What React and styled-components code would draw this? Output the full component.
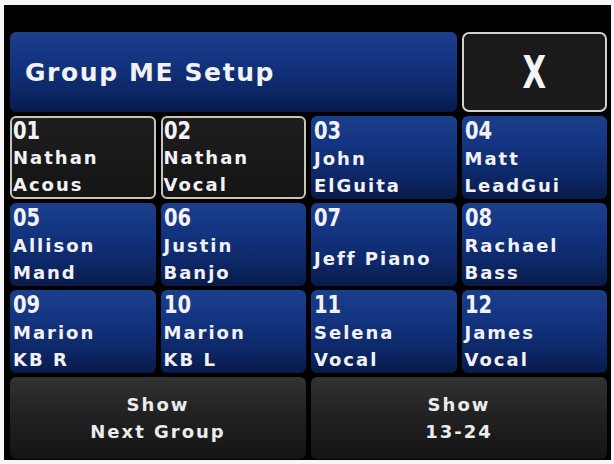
import styled, { createGlobalStyle } from "styled-components";

const GlobalStyle = createGlobalStyle`
    html, body {
        margin: 0;
        padding: 0;
        background: #f6f6f6;
    }
    body {
        font-family: "DejaVu Sans", "Verdana", sans-serif;
    }
`

const Screen = styled.div`
    margin: 5px 0 0 4px;
    width: 607px;
    height: 455px;
    box-sizing: border-box;
    background-color: #000;
    padding: 27px 4px 0 6px;
`

const Board = styled.div`
    display: grid;
    grid-template-columns: repeat(4, 1fr);
    grid-template-rows: 80px 83px 83px 83px 82px;
    column-gap: 5px;
    row-gap: 4px;
`

const blueFace = `
    background: linear-gradient(180deg, #1b3f8c 0%, #133480 35%, #0d2868 72%, #081a4a 100%);
`

const TitleBar = styled.div`
    grid-column: span 3;
    ${blueFace}
    border-radius: 6px;
    display: flex;
    align-items: center;
    padding-left: 15px;
    color: #f2f2f6;
    font-size: 25px;
    font-weight: bold;
    letter-spacing: 1.6px;
`

const CloseButton = styled.div`
    box-sizing: border-box;
    background: #1a1a1a;
    border: 2px solid #d4d0ca;
    border-radius: 7px;
    display: flex;
    align-items: center;
    justify-content: center;
    color: #f4f4f4;
`

const CloseMark = styled.span`
    display: inline-block;
    font-size: 45px;
    font-weight: bold;
    transform: scaleX(0.68);
    line-height: 1;
`

const Channel = styled.div`
    box-sizing: border-box;
    border-radius: 6px;
    display: flex;
    flex-direction: column;
    padding: 0 3px;
    color: #f2f2f6;
    ${(p) => p.selected ? `
        background: linear-gradient(180deg, #1e1e1e 0%, #141414 100%);
        border: 2px solid #cbc4b6;
        padding: 0 1px;
    ` : blueFace}
`

const Number = styled.div`
    height: 26px;
    margin-top: ${(p) => p.selected ? 0 : 2}px;
    font-size: 25px;
    line-height: 26px;
    font-weight: bold;
    transform: scaleX(0.78);
    transform-origin: left center;
    white-space: nowrap;
`

const Names = styled.div`
    flex: 1;
    display: flex;
    flex-direction: column;
    justify-content: center;
`

const Line = styled.div`
    font-size: 18px;
    line-height: 27px;
    font-weight: bold;
    letter-spacing: 2px;
    white-space: nowrap;
`

const PageButton = styled.div`
    grid-column: span 2;
    border-radius: 6px;
    background: linear-gradient(180deg, #323232 0%, #222 45%, #141414 100%);
    display: flex;
    flex-direction: column;
    align-items: center;
    justify-content: center;
    color: #ececec;
`

const channels = [
    { id: "01", lines: ["Nathan", "Acous"], selected: true },
    { id: "02", lines: ["Nathan", "Vocal"], selected: true },
    { id: "03", lines: ["John", "ElGuita"] },
    { id: "04", lines: ["Matt", "LeadGui"] },
    { id: "05", lines: ["Allison", "Mand"] },
    { id: "06", lines: ["Justin", "Banjo"] },
    { id: "07", lines: ["Jeff Piano"] },
    { id: "08", lines: ["Rachael", "Bass"] },
    { id: "09", lines: ["Marion", "KB R"] },
    { id: "10", lines: ["Marion", "KB L"] },
    { id: "11", lines: ["Selena", "Vocal"] },
    { id: "12", lines: ["James", "Vocal"] },
]

const App = () => {
    return (
        <>
            <GlobalStyle />
            <Screen>
                <Board>
                    <TitleBar>Group ME Setup</TitleBar>
                    <CloseButton><CloseMark>X</CloseMark></CloseButton>
                    {channels.map((ch) => (
                        <Channel key={ch.id} selected={ch.selected}>
                            <Number selected={ch.selected}>{ch.id}</Number>
                            <Names>
                                {ch.lines.map((l) => <Line key={l}>{l}</Line>)}
                            </Names>
                        </Channel>
                    ))}
                    <PageButton>
                        <Line>Show</Line>
                        <Line>Next Group</Line>
                    </PageButton>
                    <PageButton>
                        <Line>Show</Line>
                        <Line>13-24</Line>
                    </PageButton>
                </Board>
            </Screen>
        </>
    )
}

export default App;
